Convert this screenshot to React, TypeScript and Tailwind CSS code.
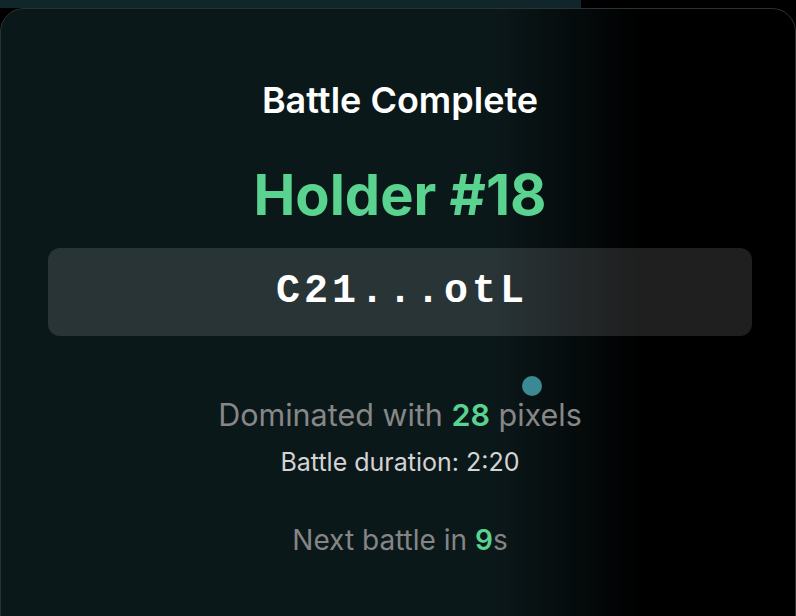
import React from "react";

const BattleComplete = () => {
  return (
    <div className="relative h-[616px] w-[796px] overflow-hidden bg-black font-['Inter',sans-serif]">
      {/* strip of the board peeking above the card */}
      <div className="flex h-[8px]">
        <div className="w-[581px] bg-[#11262b]" />
        <div className="flex-1 bg-black" />
      </div>
      <div className="relative h-[660px] rounded-3xl border border-[#2c3133] bg-[linear-gradient(to_right,#0b181a_62%,#000_81%)]">
        <div className="flex flex-col items-center pl-[4px] pt-[69px]">
          <h2 className="text-[36px] font-semibold leading-[44px] text-white">Battle Complete</h2>
          <h1 className="mt-[39px] text-[56px] font-bold leading-[68px] text-[#5ad390]">Holder #18</h1>
          <div className="mt-[19px] flex h-[88px] w-[704px] items-center justify-center rounded-xl bg-white/[0.12]">
            <span className="pl-[4px] font-['Liberation_Mono',monospace] text-[40px] font-bold tracking-[0.1em] text-white">
              C21...otL
            </span>
          </div>
          <p className="mt-[60px] text-[30.5px] leading-[38px] text-[#878787]">
            Dominated with <span className="font-semibold text-[#5ad390]">28</span> pixels
          </p>
          <p className="mt-[12px] text-[25px] leading-[32px] text-[#d4d4d4]">Battle duration: 2:20</p>
          <p className="mt-[44px] text-[28px] leading-[36px] text-[#858585]">
            Next battle in <span className="font-semibold text-[#5ad390]">9</span>s
          </p>
        </div>
        {/* stray pixel from the board */}
        <div className="absolute left-[521px] top-[367px] h-[20px] w-[20px] rounded-full bg-[#3b8a93]" />
      </div>
    </div>
  );
};

export default function App() {
  return <BattleComplete />;
}
